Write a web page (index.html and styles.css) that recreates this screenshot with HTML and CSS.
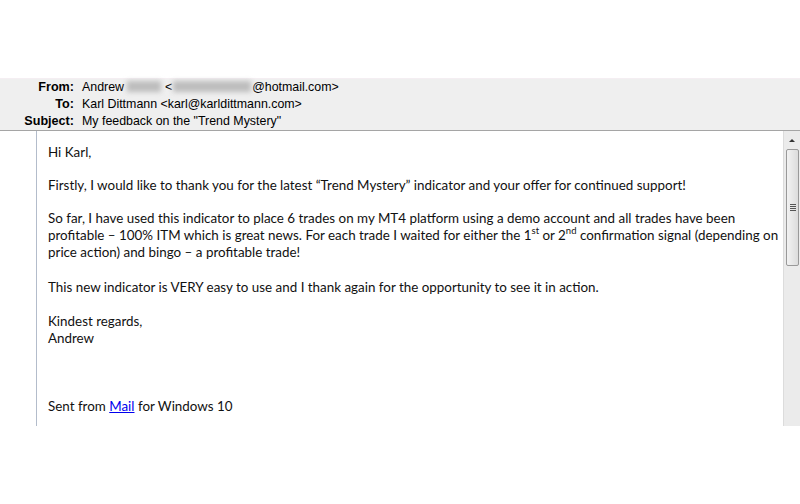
FILE: index.html
```html
<!DOCTYPE html>
<html>
<head>
<meta charset="utf-8">
<link rel="stylesheet" href="styles.css">
</head>
<body>
<div class="page">
  <div class="header">
    <div class="hrow"><span class="label">From:</span><span class="value">Andrew <span class="blur b1"></span> &lt;<span class="blur b2"></span>@hotmail.com&gt;</span></div>
    <div class="hrow"><span class="label">To:</span><span class="value">Karl Dittmann &lt;karl@karldittmann.com&gt;</span></div>
    <div class="hrow"><span class="label">Subject:</span><span class="value">My feedback on the "Trend Mystery"</span></div>
  </div>
  <div class="main">
    <div class="gutter"></div>
    <div class="content">
      <p>Hi Karl,</p>
      <p>Firstly, I would like to thank you for the latest “Trend Mystery” indicator and your offer for continued support!</p>
      <p class="p3">So far, I have used this indicator to place 6 trades on my MT4 platform using a demo account and all trades have been<br>profitable – 100% ITM which is great news. For each trade I waited for either the 1<sup>st</sup> or 2<sup>nd</sup> confirmation signal (depending on<br>price action) and bingo – a profitable trade!</p>
      <p class="p4">This new indicator is VERY easy to use and I thank again for the opportunity to see it in action.</p>
      <p>Kindest regards,<br>Andrew</p>
      <p class="sig">Sent from <a href="#">Mail</a> for Windows 10</p>
    </div>
    <div class="scrollbar">
      <div class="arrow"></div>
      <div class="thumb"><div class="grip"></div></div>
    </div>
  </div>
</div>
</body>
</html>
```

FILE: styles.css
```css
html, body {
  margin: 0;
  padding: 0;
  background: #fff;
}
.page {
  width: 800px;
  height: 504px;
  padding-top: 78px;
  box-sizing: border-box;
}
.header {
  height: 53px;
  box-sizing: border-box;
  background: #efefef;
  border-top: 1px solid #f4eef2;
  border-bottom: 1px solid #a5a5a5;
  font-family: "Liberation Sans", Arial, sans-serif;
  font-size: 12.4px;
  color: #000;
}
.hrow {
  display: flex;
  height: 17px;
  line-height: 17px;
}
.label {
  width: 74px;
  text-align: right;
  font-weight: bold;
  font-size: 12.6px;
}
.value {
  margin-left: 8px;
}
.blur {
  display: inline-block;
  background: #bdbdbd;
  filter: blur(2.5px);
  height: 11px;
  vertical-align: -1px;
}
.b1 { width: 34px; margin: 0; }
.b2 { width: 78px; margin: 0 1px 0 1px; }
.main {
  display: flex;
  height: 295px;
}
.gutter {
  width: 36px;
  border-right: 1px solid #b3bccb;
}
.content {
  flex: 1;
  padding: 13px 0 0 11px;
  font-family: Lato, "Open Sans", sans-serif;
  font-size: 13.4px;
  line-height: 17px;
  color: #111;
}
.content p {
  margin: 0 0 16px 0;
}
.content p.p3 {
  margin-bottom: 18px;
}
.content p.p4 {
  margin-bottom: 17px;
}
.content sup {
  font-size: 9.5px;
  line-height: 1;
  vertical-align: top;
  position: relative;
  top: -1px;
}
.content a {
  color: #0000ee;
  text-decoration: underline;
}
.content p.sig {
  margin-top: 51px;
}
.scrollbar {
  width: 16px;
  background: #ebebeb;
  border-left: 1px solid #dcdcdc;
  position: relative;
}
.arrow {
  width: 0;
  height: 0;
  margin: 8px auto 0;
  border-left: 3px solid transparent;
  border-right: 3px solid transparent;
  border-bottom: 3px solid #333;
}
.thumb {
  margin: 7px 1px 0 2px;
  height: 115px;
  border: 1px solid #999;
  border-radius: 2px;
  background: linear-gradient(to right, #f2f2f2, #dcdcdc);
  display: flex;
  align-items: center;
  justify-content: center;
}
.grip {
  width: 6px;
  height: 7px;
  background: repeating-linear-gradient(to bottom, #555 0 1px, transparent 1px 2px);
}
```
